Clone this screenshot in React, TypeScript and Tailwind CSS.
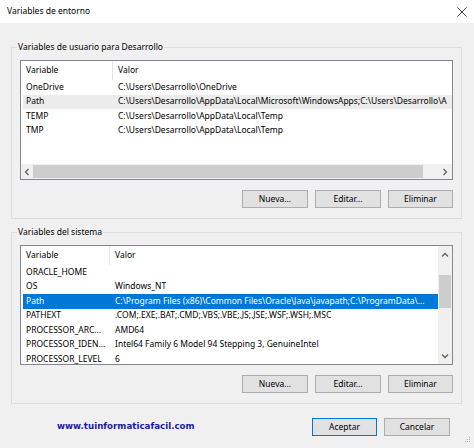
import type { ReactNode } from "react";

const USER_VARS: [string, string][] = [
  ["OneDrive", "C:\\Users\\Desarrollo\\OneDrive"],
  ["Path", "C:\\Users\\Desarrollo\\AppData\\Local\\Microsoft\\WindowsApps;C:\\Users\\Desarrollo\\A"],
  ["TEMP", "C:\\Users\\Desarrollo\\AppData\\Local\\Temp"],
  ["TMP", "C:\\Users\\Desarrollo\\AppData\\Local\\Temp"],
];

const SYSTEM_VARS: [string, string][] = [
  ["ORACLE_HOME", ""],
  ["OS", "Windows_NT"],
  ["Path", "C:\\Program Files (x86)\\Common Files\\Oracle\\Java\\javapath;C:\\ProgramData\\..."],
  ["PATHEXT", ".COM;.EXE;.BAT;.CMD;.VBS;.VBE;.JS;.JSE;.WSF;.WSH;.MSC"],
  ["PROCESSOR_ARC...", "AMD64"],
  ["PROCESSOR_IDEN...", "Intel64 Family 6 Model 94 Stepping 3, GenuineIntel"],
  ["PROCESSOR_LEVEL", "6"],
];

function Chevron({ dir }: { dir: "left" | "right" | "up" | "down" }) {
  const paths = {
    left: "M4.5 1 L1.5 4 L4.5 7",
    right: "M1.5 1 L4.5 4 L1.5 7",
    up: "M1 4.5 L4 1.5 L7 4.5",
    down: "M1 1.5 L4 4.5 L7 1.5",
  };
  const horiz = dir === "left" || dir === "right";
  return (
    <svg width={horiz ? 6 : 8} height={horiz ? 8 : 6} viewBox={horiz ? "0 0 6 8" : "0 0 8 6"}>
      <path d={paths[dir]} fill="none" stroke="#606060" strokeWidth="1.3" />
    </svg>
  );
}

function WinButton({ children, focused, width }: { children: ReactNode; focused?: boolean; width: string }) {
  return (
    <button
      className={
        width +
        " h-[18px] flex items-center justify-center bg-[#e1e1e1] border " +
        (focused ? "border-[#0078d7]" : "border-[#adadad]")
      }
    >
      {children}
    </button>
  );
}

function ButtonRow() {
  return (
    <div className="mt-[10px] flex justify-end gap-[7px]">
      <WinButton width="w-[66px]">Nueva...</WinButton>
      <WinButton width="w-[66px]">Editar...</WinButton>
      <WinButton width="w-[65px]">Eliminar</WinButton>
    </div>
  );
}

function Group({ title, children }: { title: string; children: ReactNode }) {
  return (
    <fieldset className="min-w-0 border border-[#dcdcdc] px-[8px] pb-[10px]">
      <legend className="ml-[-3px] px-[1px] leading-[14px]">{title}</legend>
      {children}
    </fieldset>
  );
}

function UserList() {
  return (
    <div className="mt-[6px] h-[120px] border border-[#828790] bg-white flex flex-col overflow-hidden">
      <div className="h-[19px] flex items-center shrink-0 pl-[2px]">
        <div className="w-[90px] h-full flex items-center pl-[3px] border-r border-[#e5e5e5]">Variable</div>
        <div className="pl-[5px]">Valor</div>
      </div>
      {USER_VARS.map(([name, value]) => (
        <div
          key={name}
          className={
            "h-[14.5px] shrink-0 flex items-center ml-[2px] whitespace-nowrap overflow-hidden " +
            (name === "Path" ? "bg-[#ececec]" : "")
          }
        >
          <div className="w-[90px] shrink-0 pl-[3px]">{name}</div>
          <div className="pl-[5px]">{value}</div>
        </div>
      ))}
      <div className="flex-1" />
      <div className="h-[15px] shrink-0 flex bg-[#f0f0f0]">
        <div className="w-[12px] flex items-center justify-center"><Chevron dir="left" /></div>
        <div className="flex-1 flex items-center">
          <div className="w-[390px] h-[13px] bg-[#cdcdcd]" />
        </div>
        <div className="w-[15px] flex items-center justify-center"><Chevron dir="right" /></div>
      </div>
    </div>
  );
}

function SystemList() {
  return (
    <div className="mt-[6px] h-[120px] border border-[#828790] bg-white flex overflow-hidden">
      <div className="flex-1 min-w-0 flex flex-col overflow-hidden">
        <div className="h-[19px] flex items-center shrink-0 pl-[2px]">
          <div className="w-[87px] h-full flex items-center pl-[3px] border-r border-[#e5e5e5]">Variable</div>
          <div className="pl-[5px]">Valor</div>
        </div>
        {SYSTEM_VARS.map(([name, value]) => (
          <div
            key={name}
            className={
              "h-[14.5px] shrink-0 flex items-center ml-[2px] whitespace-nowrap overflow-hidden " +
              (name === "Path" ? "bg-[#0078d7] text-white" : "")
            }
          >
            <div className="w-[87px] shrink-0 pl-[3px]">{name}</div>
            <div className="pl-[5px]">{value}</div>
          </div>
        ))}
      </div>
      <div className="w-[14px] shrink-0 flex flex-col bg-[#f0f0f0]">
        <div className="h-[17px] flex items-center justify-center"><Chevron dir="up" /></div>
        <div className="flex-1 flex justify-center">
          <div className="mt-[12px] w-[12px] h-[33px] bg-[#cdcdcd]" />
        </div>
        <div className="h-[17px] flex items-center justify-center"><Chevron dir="down" /></div>
      </div>
    </div>
  );
}

export default function App() {
  return (
    <div className="w-[474px] h-[448px] bg-[#f0f0f0] flex flex-col text-[8.5px] text-black font-['Noto_Sans',sans-serif]">
      {/* Title bar */}
      <div className="h-[23px] bg-white flex items-center justify-between pl-[7px] pr-[7px] shrink-0">
        <span className="text-[8.5px]">Variables de entorno</span>
        <svg width="10" height="10" viewBox="0 0 10 10">
          <path d="M0.5 0.5 L9.5 9.5 M9.5 0.5 L0.5 9.5" stroke="#222" strokeWidth="0.9" />
        </svg>
      </div>

      <div className="flex flex-col pl-[11px] pr-[12px] pt-[17px]">
        <Group title="Variables de usuario para Desarrollo">
          <UserList />
          <ButtonRow />
        </Group>

        <div className="mt-[6px]">
          <Group title="Variables del sistema">
            <SystemList />
            <ButtonRow />
          </Group>
        </div>

        <div className="mt-[14px] flex items-center">
          <span className="ml-[46px] font-['DejaVu_Sans',sans-serif] font-bold text-[8.7px] text-[#1a1aa8]">
            www.tuinformaticafacil.com
          </span>
          <div className="ml-auto mr-[12px] flex gap-[7px]">
            <WinButton width="w-[65px]" focused>Aceptar</WinButton>
            <WinButton width="w-[66px]">Cancelar</WinButton>
          </div>
        </div>
      </div>

      <div className="mt-auto flex justify-end pr-[3px] pb-[3px]">
        <svg width="8" height="8" viewBox="0 0 8 8">
          <rect x="6" y="0" width="1" height="1" fill="#b0b0b0" />
          <rect x="4" y="2" width="1" height="1" fill="#b0b0b0" />
          <rect x="6" y="2" width="1" height="1" fill="#b0b0b0" />
          <rect x="2" y="4" width="1" height="1" fill="#b0b0b0" />
          <rect x="4" y="4" width="1" height="1" fill="#b0b0b0" />
          <rect x="6" y="4" width="1" height="1" fill="#b0b0b0" />
        </svg>
      </div>
    </div>
  );
}
